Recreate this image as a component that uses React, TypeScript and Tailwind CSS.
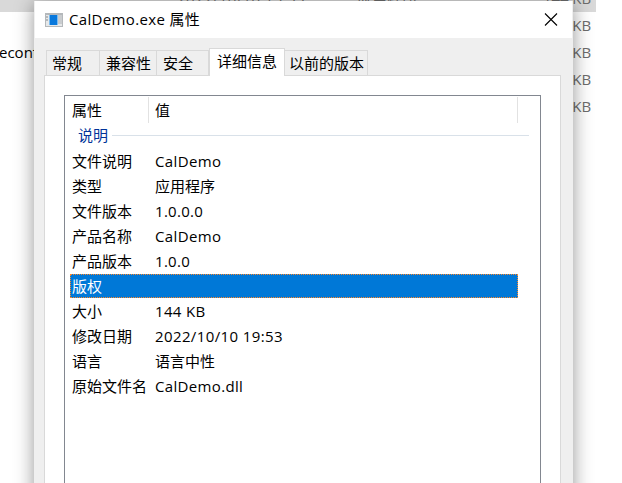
import type { ReactNode } from 'react';

const details: [string, string, string][] = [
  ['文件说明', 'CalDemo', 'tracking-[0.38px]'],
  ['类型', '应用程序', 'tracking-normal'],
  ['文件版本', '1.0.0.0', 'tracking-[0.3px]'],
  ['产品名称', 'CalDemo', 'tracking-[0.38px]'],
  ['产品版本', '1.0.0', 'tracking-[0.3px]'],
  ['版权', '', 'tracking-normal'],
  ['大小', '144 KB', 'tracking-[0.32px]'],
  ['修改日期', '2022/10/10 19:53', 'tracking-[0.39px]'],
  ['语言', '语言中性', 'tracking-normal'],
  ['原始文件名', 'CalDemo.dll', 'tracking-[0.34px]'],
];

function Tab({ children, className }: { children: ReactNode; className: string }) {
  return (
    <div className={`flex h-[25px] items-center border-t border-r border-[#d9d9d9] ${className}`}>
      {children}
    </div>
  );
}

function AppIcon() {
  return (
    <svg width="18" height="14" viewBox="0 0 18 14" shapeRendering="crispEdges">
      <rect width="18" height="14" fill="#b4b8bb" />
      <rect x="1" y="2" width="16" height="11" fill="#e6e8e9" />
      <rect x="1" y="3" width="2" height="2" fill="#b4b8bb" />
      <rect x="1" y="6" width="2" height="2" fill="#b4b8bb" />
      <rect x="13" y="2" width="4" height="9" fill="#c9cccf" />
      <rect x="4" y="2" width="9" height="10" fill="#7bbcf0" />
      <rect x="5" y="2" width="7" height="10" fill="#0878dc" />
    </svg>
  );
}

function FileRows() {
  return (
    <div className="-mt-[15px] w-[596px] text-[#6d6d6d]">
      {[0, 1, 2, 3, 4].map((row) => (
        <div key={row} className={`flex h-[27px] items-center pb-px ${row === 0 ? 'bg-[#d9d9d9]' : ''}`}>
          <span className="-ml-px w-[178px] shrink-0 text-black">{row === 2 ? 'econfig.json' : ''}</span>
          <span className="w-[180px] shrink-0 tracking-[0.39px]">{row === 0 ? '2022/10/10 19:53' : ''}</span>
          <span className="w-[170px] shrink-0">{row === 0 ? '应用程序' : ''}</span>
          <span className="w-[64px] shrink-0 text-right tracking-[-0.1px]">144 KB</span>
        </div>
      ))}
    </div>
  );
}

export default function App() {
  return (
    <div className="relative h-[483px] w-[622px] overflow-hidden bg-white font-['Open_Sans','Noto_Sans_CJK_SC',sans-serif] text-[15px] leading-[24px] whitespace-nowrap text-black">
      <div className="flow-root">
        <FileRows />
      </div>
      <div className="absolute top-px left-[34px] flex h-[520px] w-[539px] flex-col bg-[#efefef] shadow-[0_3px_18px_rgba(0,0,0,0.42)]">
        <header className="mx-px flex h-[37px] shrink-0 items-center bg-white pl-2.5">
          <AppIcon />
          <span className="-mt-0.5 ml-1.5 tracking-[0.34px]">CalDemo.exe 属性</span>
          <svg className="mr-[14px] ml-auto" width="14" height="13" viewBox="0 0 14 13">
            <path d="M1 .5l12 12M13 .5l-12 12" stroke="#000" strokeWidth="1.1" />
          </svg>
        </header>
        <nav className="z-10 ml-3 flex h-[37px] shrink-0 items-end">
          <Tab className="w-[54px] border-l pl-[5px]">常规</Tab>
          <Tab className="w-[57px] pl-1.5">兼容性</Tab>
          <Tab className="w-[52px] pl-1.5">安全</Tab>
          <div className="-mb-px flex h-[28px] w-[76px] items-center border-x border-t border-[#d9d9d9] bg-white pb-1 pl-[7px]">详细信息</div>
          <Tab className="w-[83px] pl-1">以前的版本</Tab>
        </nav>
        <section className="ml-2.5 flex w-[517px] grow border border-[#d9d9d9] bg-white pt-[19px] pl-[19px]">
          <div className="w-[477px] border border-[#828790]">
            <div className="flex h-[28px] items-start pt-px">
              <span className="h-[26px] w-[84px] border-r border-[#e2e2e2] pt-px pl-[7px]">属性</span>
              <span className="h-[26px] w-[369px] border-r border-[#e2e2e2] pt-px pl-1.5">值</span>
            </div>
            <div className="flex h-[25px] items-center pt-px pl-[13px] text-[#003399]">
              <span className="-mt-1">说明</span>
              <span className="-mt-3 ml-1 h-px w-[417px] translate-y-1 bg-[#d9e1e9]" />
            </div>
            {details.map(([name, value, spacing]) => (
              <div
                key={name}
                className={`mb-px ml-[5px] flex h-6 w-[448px] items-center pl-0.5 ${name === '版权' ? 'border border-dotted border-[#ff8728] bg-[#0078d7] pl-px text-white' : ''}`}
              >
                <span className="w-[83px] shrink-0">{name}</span>
                <span className={spacing}>{value}</span>
              </div>
            ))}
          </div>
        </section>
      </div>
    </div>
  );
}
